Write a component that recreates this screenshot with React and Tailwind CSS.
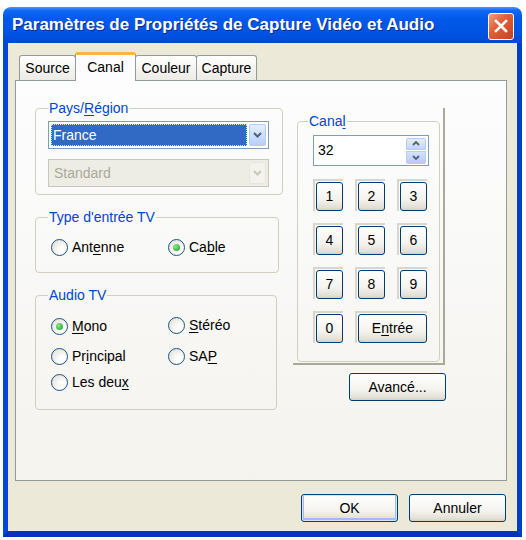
import React from "react";

function U({ children }) {
  return <span className="underline decoration-1 underline-offset-[2px]">{children}</span>;
}

function Radio({ checked, children }) {
  return (
    <div className="flex items-center gap-[4px] h-[17px]">
      <span className="w-[17px] h-[17px] shrink-0 rounded-full border border-[#1C5180] bg-[radial-gradient(circle_at_70%_70%,#FFFFFF_20%,#DCD9CE)] flex items-center justify-center">
        {checked && (
          <span className="w-[7px] h-[7px] rounded-full bg-[radial-gradient(circle_at_35%_35%,#8BE88B,#1D9B1D)]" />
        )}
      </span>
      <span className="leading-[17px]">{children}</span>
    </div>
  );
}

function XpButton({ children, className = "" }) {
  return (
    <div
      className={
        "rounded-[3px] border border-[#003C74] bg-[linear-gradient(to_bottom,#FFFFFF,#F4F3EE_60%,#E3E0D6_90%,#D6D0C5)] flex items-center justify-center text-black " +
        className
      }
    >
      {children}
    </div>
  );
}

function Key({ children, wide }) {
  return (
    <div className={"border-t-[2px] border-l-[2px] border-[#D9D7CC] pt-[1px] pl-[1px] " + (wide ? "col-span-2" : "")}>
      <XpButton className={(wide ? "w-[69px]" : "w-[27px]") + " h-[29px]"}>{children}</XpButton>
    </div>
  );
}

function Chevron({ color }) {
  return (
    <svg width="9" height="6" viewBox="0 0 9 6">
      <path d="M1 1 L4.5 4.5 L8 1" fill="none" stroke={color} strokeWidth="2" />
    </svg>
  );
}

export default function App() {
  return (
    <div className="w-[526px] h-[540px] bg-white pt-[7px] pl-[3px] font-['Liberation_Sans',Arial,sans-serif] text-[14px] text-black overflow-hidden">
      <div className="w-[519px] h-[530px] flex flex-col rounded-t-[8px] overflow-hidden">
        {/* Title bar */}
        <div className="h-[36px] shrink-0 bg-[linear-gradient(to_bottom,#4A96FF_0%,#1068F0_10%,#0058EA_35%,#0054E3_70%,#0048D6_100%)] flex items-center justify-between pl-[9px] pr-[8px]">
          <span className="text-white font-bold text-[17px] [text-shadow:1px_1px_0_#0A2A8F]">
            Paramètres de Propriétés de Capture Vidéo et Audio
          </span>
          <div className="w-[26px] h-[27px] mt-[2px] rounded-[3px] border border-white bg-[linear-gradient(135deg,#F0A080_0%,#E2603A_40%,#C8401E_100%)] flex items-center justify-center">
            <svg width="14" height="14" viewBox="0 0 14 14">
              <path d="M2 2 L12 12 M12 2 L2 12" stroke="white" strokeWidth="2.6" strokeLinecap="square" />
            </svg>
          </div>
        </div>
        {/* Body */}
        <div className="flex-1 bg-[#ECE9D8] border-l-[5px] border-r-[5px] border-b-[6px] border-l-[#0048DA] border-r-[#0040C8] border-b-[#0034B8] flex flex-col">
          {/* Tabs */}
          <div className="h-[37px] flex items-end pl-[11px] shrink-0">
            <div className="w-[57px] h-[25px] border border-b-0 border-[#919B9C] rounded-t-[3px] bg-[linear-gradient(to_bottom,#FFFFFF,#ECEBE6)] flex items-center justify-center">
              Source
            </div>
            <div className="w-[61px] h-[29px] -ml-[1px] -mb-[1px] relative z-10 bg-[#FCFCFE] border-x border-[#919B9C] border-t-[3px] border-t-[#FFB43C] rounded-t-[3px] flex items-start justify-center pt-[2px]">
              Canal
            </div>
            <div className="w-[62px] h-[25px] -ml-[1px] border border-b-0 border-[#919B9C] rounded-t-[3px] bg-[linear-gradient(to_bottom,#FFFFFF,#ECEBE6)] flex items-center justify-center">
              Couleur
            </div>
            <div className="w-[61px] h-[25px] -ml-[1px] border border-b-0 border-[#919B9C] rounded-t-[3px] bg-[linear-gradient(to_bottom,#FFFFFF,#ECEBE6)] flex items-center justify-center">
              Capture
            </div>
          </div>
          {/* Panel */}
          <div className="ml-[7px] w-[492px] h-[401px] border border-[#919B9C] bg-[linear-gradient(to_bottom,#FDFDFE,#F4F3EE)] flex gap-[10px] pl-[19px] pt-[19px]">
            {/* Left column */}
            <div className="flex flex-col gap-[14px]">
              <fieldset className="w-[248px] border border-[#D0D0BF] rounded-[4px] px-[12px] pb-[7px]">
                <legend className="px-[1px] leading-[16px] text-[#0046D5]">
                  Pays/<U>R</U>égion
                </legend>
                <div className="mt-[5px] h-[28px] w-[221px] border border-[#7F9DB9] bg-white flex items-center p-[2px] gap-[2px]">
                  <div className="flex-1 h-full bg-[#316AC5] outline-1 outline-dotted outline-[#FFE08A] -outline-offset-1 text-white flex items-center pl-[2px]">
                    France
                  </div>
                  <div className="w-[17px] h-full rounded-[2px] border border-[#B9CBF3] bg-[linear-gradient(to_bottom,#E6EEFD,#B9CDF7)] flex items-center justify-center">
                    <Chevron color="#4D6185" />
                  </div>
                </div>
                <div className="mt-[10px] h-[28px] w-[221px] border border-[#C9C7BA] bg-[#EEEDE5] flex items-center p-[2px] gap-[2px]">
                  <div className="flex-1 h-full text-[#ACA899] flex items-center pl-[3px]">Standard</div>
                  <div className="w-[17px] h-full rounded-[2px] border border-[#E8E6DE] bg-[#F3F2EC] flex items-center justify-center">
                    <Chevron color="#C9C7BA" />
                  </div>
                </div>
              </fieldset>

              <fieldset className="w-[244px] border border-[#D0D0BF] rounded-[4px] px-[15px] pb-[16px]">
                <legend className="-ml-[3px] px-[1px] leading-[16px] text-[#0046D5]">Type d'entrée TV</legend>
                <div className="mt-[14px] grid grid-cols-[117px_1fr]">
                  <Radio>
                    Ant<U>e</U>nne
                  </Radio>
                  <Radio checked>
                    Ca<U>b</U>le
                  </Radio>
                </div>
              </fieldset>

              <fieldset className="w-[242px] border border-[#D0D0BF] rounded-[4px] px-[15px] pb-[18px]">
                <legend className="-ml-[3px] px-[1px] leading-[16px] text-[#0046D5]">Audio TV</legend>
                <div className="mt-[15px] grid grid-cols-[117px_1fr] gap-y-[13px]">
                  <Radio checked>
                    <U>M</U>ono
                  </Radio>
                  <div className="-mt-[1px]">
                    <Radio>
                      <U>S</U>téréo
                    </Radio>
                  </div>
                  <Radio>
                    Pr<U>i</U>ncipal
                  </Radio>
                  <Radio>
                    SA<U>P</U>
                  </Radio>
                </div>
                <div className="mt-[9px]">
                  <Radio>
                    Les deu<U>x</U>
                  </Radio>
                </div>
              </fieldset>
            </div>

            {/* Right column */}
            <div className="mt-[8px] flex flex-col items-end">
              <div className="w-[152px] h-[257px] border-r-2 border-b-2 border-r-[#ACA899] border-b-[#ACA899] pl-[4px] pr-[3px] pt-[5px]">
                <fieldset className="border border-[#D0D0BF] rounded-[4px] pl-[15px] pr-[10px] pb-[18px]">
                  <legend className="-ml-[5px] px-[1px] leading-[16px] text-[#0046D5]">
                    Cana<U>l</U>
                  </legend>
                  <div className="mt-[6px] w-[116px] h-[31px] border border-[#7F9DB9] bg-white flex items-center justify-between pl-[4px] pr-[2px]">
                    <span>32</span>
                    <div className="w-[20px] h-[26px] flex flex-col gap-[1px]">
                      <div className="flex-1 rounded-t-[2px] border border-[#B9CBF3] bg-[linear-gradient(to_bottom,#E6EEFD,#C3D4F8)] flex items-center justify-center">
                        <svg width="8" height="5" viewBox="0 0 8 5">
                          <path d="M1 4 L4 1 L7 4" fill="none" stroke="#4D6185" strokeWidth="1.8" />
                        </svg>
                      </div>
                      <div className="flex-1 rounded-b-[2px] border border-[#B9CBF3] bg-[linear-gradient(to_bottom,#D6E2FB,#B7CBF5)] flex items-center justify-center">
                        <svg width="8" height="5" viewBox="0 0 8 5">
                          <path d="M1 1 L4 4 L7 1" fill="none" stroke="#4D6185" strokeWidth="1.8" />
                        </svg>
                      </div>
                    </div>
                  </div>
                  <div className="mt-[13px] grid grid-cols-[30px_30px_30px] gap-x-[12px] gap-y-[12px]">
                    <Key>1</Key>
                    <Key>2</Key>
                    <Key>3</Key>
                    <Key>4</Key>
                    <Key>5</Key>
                    <Key>6</Key>
                    <Key>7</Key>
                    <Key>8</Key>
                    <Key>9</Key>
                    <Key>0</Key>
                    <Key wide>
                      E<U>n</U>trée
                    </Key>
                  </div>
                </fieldset>
              </div>
              <XpButton className="mt-[8px] mr-[-1px] w-[97px] h-[28px]">Avancé...</XpButton>
            </div>
          </div>
          {/* Bottom buttons */}
          <div className="flex justify-end gap-[11px] pr-[11px] pt-[13px]">
            <XpButton className="w-[97px] h-[28px] shadow-[inset_0_0_0_1px_#CEE7FF,inset_0_-1px_0_2px_#A6B9F0]">OK</XpButton>
            <XpButton className="w-[97px] h-[28px]">Annuler</XpButton>
          </div>
        </div>
      </div>
    </div>
  );
}
